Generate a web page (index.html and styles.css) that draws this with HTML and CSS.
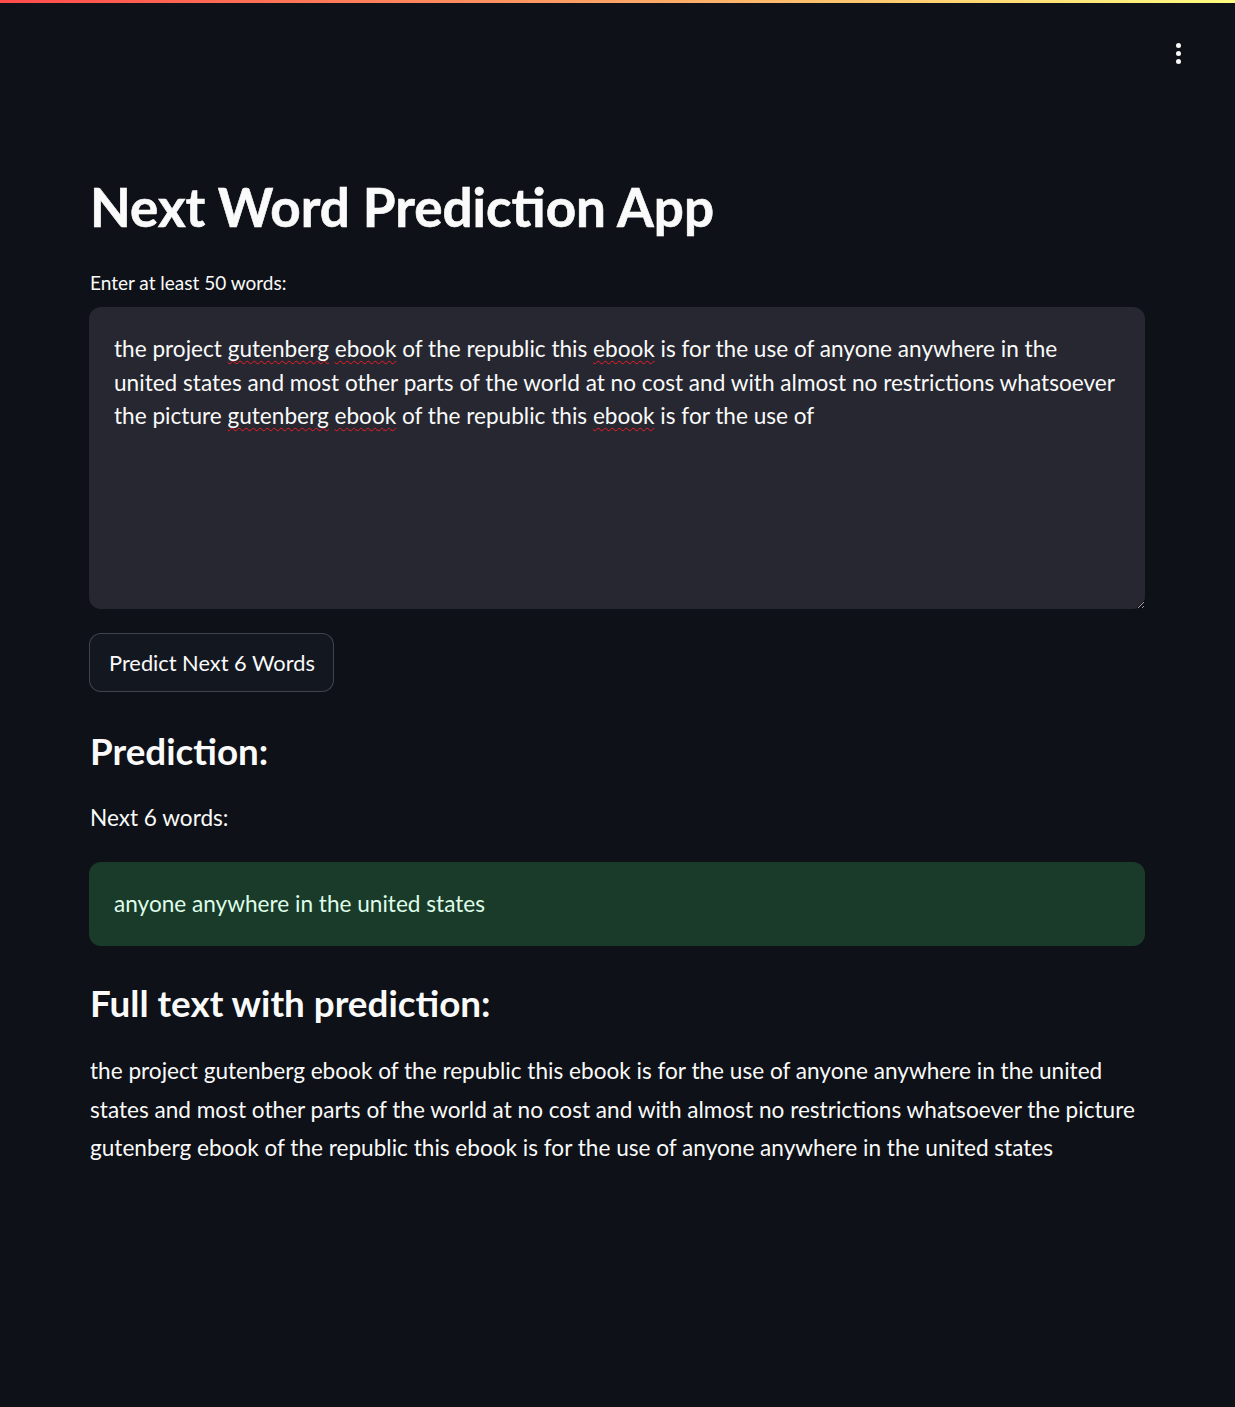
FILE: index.html
```html
<!DOCTYPE html>
<html lang="en">
<head>
<meta charset="utf-8">
<title>Next Word Prediction App</title>
<link rel="stylesheet" href="styles.css">
</head>
<body>
<div class="topbar"></div>
<header class="toolbar">
  <button class="menu" aria-label="Main menu"><span class="dot"></span><span class="dot"></span><span class="dot"></span></button>
</header>
<main class="main">
  <h1 class="title">Next Word Prediction App</h1>
  <label class="field-label">Enter at least 50 words:</label>
  <div class="textarea" contenteditable="true" spellcheck="false">the project <span class="sp">gutenberg</span> <span class="sp">ebook</span> of the republic this <span class="sp">ebook</span> is for the use of anyone anywhere in the<br>united states and most other parts of the world at no cost and with almost no restrictions whatsoever<br>the picture <span class="sp">gutenberg</span> <span class="sp">ebook</span> of the republic this <span class="sp">ebook</span> is for the use of</div>
  <div class="btn-row"><button class="btn">Predict Next 6 Words</button></div>
  <h3 class="subhead">Prediction:</h3>
  <p class="text">Next 6 words:</p>
  <div class="success">anyone anywhere in the united states</div>
  <h3 class="subhead subhead-2">Full text with prediction:</h3>
  <p class="text full">the project gutenberg ebook of the republic this ebook is for the use of anyone anywhere in the united<br>states and most other parts of the world at no cost and with almost no restrictions whatsoever the picture<br>gutenberg ebook of the republic this ebook is for the use of anyone anywhere in the united states</p>
</main>
</body>
</html>
```
FILE: styles.css
```css
:root { color-scheme: dark; }
* { box-sizing: border-box; }
html, body { margin: 0; padding: 0; }
body {
  background: #0e1117;
  color: #fafafa;
  font-family: Lato, "Noto Sans", sans-serif;
  min-height: 1407px;
}
.topbar {
  height: 3px;
  background: linear-gradient(90deg, #ff4b4b, #fffd80);
}
.toolbar {
  height: 100px;
  display: flex;
  justify-content: flex-end;
  align-items: flex-start;
  padding: 40px 47px 0 0;
}
.menu {
  background: none;
  border: 0;
  padding: 0;
  width: 20px;
  display: flex;
  flex-direction: column;
  align-items: center;
  gap: 3px;
}
.dot {
  width: 5px;
  height: 5px;
  border-radius: 50%;
  background: #fafafa;
}
.main {
  display: flex;
  flex-direction: column;
  align-items: stretch;
  padding: 72px 90px 0 89px;
}
.title {
  margin: 0;
  font-size: 53px;
  font-weight: 700;
  line-height: 1.2;
  padding-left: 1px;
  -webkit-text-stroke: 0.6px #fafafa;
}
.field-label {
  margin-top: 29px;
  font-size: 19px;
  line-height: 1.6;
  padding-left: 1px;
}
.textarea {
  margin-top: 9px;
  height: 302px;
  background: #262730;
  border-radius: 12px;
  padding: 25px 24px 0 25px;
  font-size: 22.6px;
  line-height: 33.6px;
  white-space: nowrap;
  overflow: auto;
  resize: vertical;
  outline: none;
}
.sp {
  text-decoration: underline wavy #ee1c25;
  text-decoration-thickness: 1.4px;
  text-underline-offset: 3px;
  text-decoration-skip-ink: none;
}
.btn-row {
  display: flex;
  margin-top: 24px;
}
.btn {
  height: 59px;
  padding: 0 18px 0 19px;
  background: #131720;
  color: #fafafa;
  border: 1px solid rgba(250, 250, 250, 0.2);
  border-radius: 12px;
  font-family: inherit;
  font-size: 21.8px;
}
.subhead {
  margin: 37px 0 0;
  font-size: 36.8px;
  font-weight: 700;
  line-height: 1.2;
  padding-left: 1px;
}
.subhead-2 { margin-top: 35px; }
.text {
  margin: 27px 0 0;
  font-size: 22.6px;
  line-height: 1.6;
  padding-left: 1px;
}
.success {
  margin-top: 26px;
  height: 84px;
  display: flex;
  align-items: center;
  background: #1a3b29;
  color: #dffde9;
  border-radius: 12px;
  padding: 0 24px 0 25px;
  font-size: 22.6px;
  line-height: 1.6;
}
.full {
  line-height: 38.4px;
  white-space: nowrap;
}
```
